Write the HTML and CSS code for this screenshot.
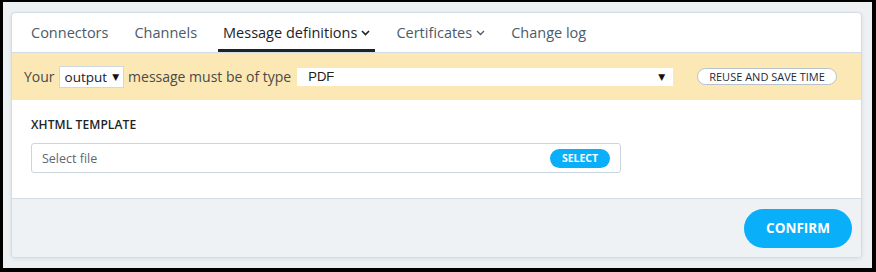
FILE: index.html
```html
<!DOCTYPE html>
<html>
<head>
<meta charset="utf-8">
<link rel="stylesheet" href="styles.css">
</head>
<body>
<div class="frame">
  <div class="card">
    <nav class="tabs">
      <a class="tab">Connectors</a>
      <a class="tab">Channels</a>
      <a class="tab active">Message definitions <svg class="chev" width="9" height="6" viewBox="0 0 9 6"><path d="M1 1l3.5 3.5L8 1" fill="none" stroke="currentColor" stroke-width="1.6"/></svg></a>
      <a class="tab">Certificates <svg class="chev" width="9" height="6" viewBox="0 0 9 6"><path d="M1 1l3.5 3.5L8 1" fill="none" stroke="currentColor" stroke-width="1.3"/></svg></a>
      <a class="tab">Change log</a>
    </nav>
    <div class="banner">
      <span>Your</span>
      <span class="small-select">output <span class="arrow">▼</span></span>
      <span>message must be of type</span>
      <span class="type-select"><span>PDF</span><span class="arrow">▼</span></span>
      <button class="reuse">REUSE AND SAVE TIME</button>
    </div>
    <div class="content">
      <div class="label">XHTML TEMPLATE</div>
      <div class="file-input">
        <span class="placeholder">Select file</span>
        <button class="select-btn">SELECT</button>
      </div>
    </div>
    <div class="footer">
      <button class="confirm">CONFIRM</button>
    </div>
  </div>
</div>
</body>
</html>
```

FILE: styles.css
```css
* { box-sizing: border-box; }
html, body { margin: 0; padding: 0; background: #000; }
body { font-family: "Open Sans", "Noto Sans", sans-serif; }

.frame {
  width: 876px;
  height: 272px;
  border-style: solid;
  border-color: #000;
  border-width: 2px 4px 4px 3px;
  background: #eef1f4;
  padding: 10px 10px 10px 8px;
}

.card {
  background: #fff;
  border: 1px solid #d3dbe3;
  border-radius: 4px;
  box-shadow: 0 1px 4px rgba(0,0,0,0.08);
  height: 246px;
  display: flex;
  flex-direction: column;
  overflow: hidden;
}

.tabs {
  display: flex;
  align-items: stretch;
  height: 40px;
  border-bottom: 1px solid #d3dbe3;
  padding-left: 14px;
  gap: 16px;
}
.tab {
  display: flex;
  align-items: center;
  gap: 4px;
  padding: 0 5px;
  font-size: 14.5px;
  color: #4b5a69;
  border-bottom: 3px solid transparent;
  padding-top: 3px;
}
.tab.active {
  color: #1d2329;
  border-bottom-color: #1d2329;
}
.chev { margin-top: 1px; }

.banner {
  background: #fce8b4;
  height: 47px;
  display: flex;
  align-items: center;
  padding-left: 12px;
  font-size: 14px;
  color: #4a4a4a;
  gap: 4px;
}
.small-select {
  background: #fff;
  border: 1px solid #cfd7df;
  height: 22px;
  display: flex;
  align-items: center;
  padding: 0 4px 0 5px;
  color: #222;
  font-size: 13.5px;
  gap: 5px;
}
.arrow { font-size: 9px; color: #111; font-family: "DejaVu Sans", sans-serif; }
.type-select {
  margin-left: 2px;
  background: #fff;
  width: 376px;
  height: 18px;
  display: flex;
  align-items: center;
  justify-content: space-between;
  padding: 0 8px 0 11px;
  font-family: "Liberation Sans", Arial, sans-serif;
  font-size: 13px;
  color: #222;
}
.reuse {
  margin-left: 20px;
  height: 17px;
  padding: 0 11px;
  border: 1px solid #b8c2cc;
  border-radius: 9px;
  background: #fff;
  font-family: "Open Sans", sans-serif;
  font-size: 11px;
  color: #1f2a35;
  line-height: 15px;
}

.content {
  height: 98px;
  padding: 16px 20px 0 19px;
}
.label {
  font-size: 12px;
  font-weight: 600;
  color: #1e2328;
  letter-spacing: 0.1px;
}
.file-input {
  margin-top: 10px;
  width: 590px;
  height: 30px;
  border: 1px solid #cbd5de;
  border-radius: 3px;
  display: flex;
  align-items: center;
  justify-content: space-between;
  padding: 0 10px 0 10px;
}
.placeholder { font-size: 12.5px; color: #5f6770; }
.select-btn {
  background: #0aaffa;
  color: #fff;
  border: none;
  border-radius: 10px;
  height: 19px;
  width: 60px;
  font-family: "Open Sans", sans-serif;
  font-weight: 700;
  font-size: 10.5px;
  padding: 0;
}

.footer {
  flex: 1;
  background: #eef2f5;
  border-top: 1px solid #d3dbe3;
  display: flex;
  align-items: center;
  justify-content: flex-end;
  padding-right: 9px;
}
.confirm {
  background: #0aaffa;
  color: #fff;
  border: none;
  border-radius: 20px;
  width: 108px;
  height: 39px;
  font-family: "Open Sans", sans-serif;
  font-weight: 700;
  font-size: 13.5px;
  padding: 0;
}
```
